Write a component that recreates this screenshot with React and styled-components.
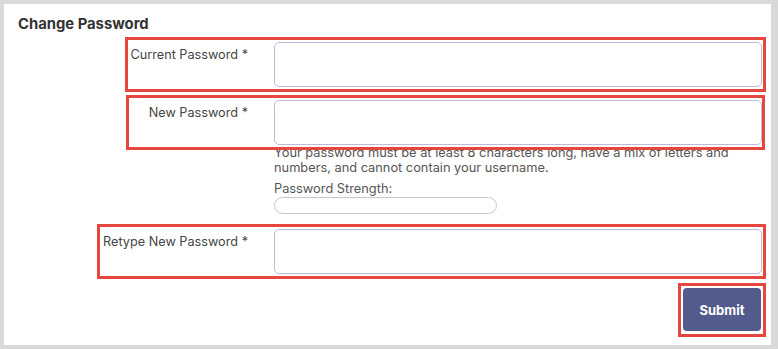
import React from "react";
import styled, { createGlobalStyle } from "styled-components";

const GlobalStyle = createGlobalStyle`
  html, body {
    margin: 0;
    padding: 0;
    background: #d9d9d9;
  }
  body {
    font-family: Inter, "Liberation Sans", sans-serif;
  }
`;

const Card = styled.div`
  display: flex;
  flex-direction: column;
  box-sizing: border-box;
  margin: 4px 7px 0 4px;
  height: 341px;
  background: #ffffff;
`;

const Title = styled.h2`
  margin: 12px 0 0 14px;
  font-size: 14.8px;
  line-height: 17px;
  font-weight: 700;
  color: #333333;
`;

const Highlight = styled.div`
  position: relative;
  z-index: 1;
  display: flex;
  border: 3px solid #e5473f;
  padding: 2px ${p => p.$padRight}px 2px 1px;
  margin: ${p => p.$top}px ${p => p.$right}px 0 ${p => p.$left}px;
`;

const Label = styled.label`
  flex: 1;
  min-width: 0;
  white-space: nowrap;
  text-align: right;
  padding: 5px 26px 0 0;
  font-size: 12.7px;
  line-height: 16px;
  color: #454545;
`;

const Field = styled.input`
  flex-shrink: 0;
  width: 488px;
  height: 45px;
  box-sizing: border-box;
  border: 1px solid #b9bddb;
  border-radius: 5px;
  background: #ffffff;
  outline: none;
`;

const Help = styled.div`
  margin: -5px 0 0 270px;
  max-width: 470px;
  font-size: 12.8px;
  line-height: 15px;
  color: #555555;
`;

const StrengthLabel = styled.div`
  margin-top: 6px;
`;

const StrengthBar = styled.div`
  margin-top: 1px;
  width: 223px;
  height: 17px;
  box-sizing: border-box;
  border: 1px solid #c8c8cc;
  border-radius: 9px;
`;

const ButtonWrap = styled.div`
  align-self: flex-end;
  margin: 4px 5px 0 0;
  border: 3px solid #e5473f;
  padding: 2px 2px 3px 2px;
`;

const SubmitButton = styled.button`
  display: block;
  width: 78px;
  height: 43px;
  border: none;
  border-radius: 4px;
  background: #535b8d;
  color: #ffffff;
  font-family: Inter, "Liberation Sans", sans-serif;
  font-size: 13px;
  font-weight: 700;
  cursor: pointer;
`;

export default function App() {
    return (
        <>
            <GlobalStyle />
            <Card>
                <Title>Change Password</Title>
                <Highlight $top={4} $left={121} $right={5} $padRight={1}>
                    <Label>Current Password *</Label>
                    <Field type="password" />
                </Highlight>
                <Highlight $top={3} $left={122} $right={6} $padRight={0}>
                    <Label>New Password *</Label>
                    <Field type="password" />
                </Highlight>
                <Help>
                    Your password must be at least 8 characters long, have a mix of letters and numbers, and cannot contain your username.
                    <StrengthLabel>Password Strength:</StrengthLabel>
                    <StrengthBar />
                </Help>
                <Highlight $top={10} $left={93} $right={5} $padRight={1}>
                    <Label>Retype New Password *</Label>
                    <Field type="password" />
                </Highlight>
                <ButtonWrap>
                    <SubmitButton>Submit</SubmitButton>
                </ButtonWrap>
            </Card>
        </>
    )
}
